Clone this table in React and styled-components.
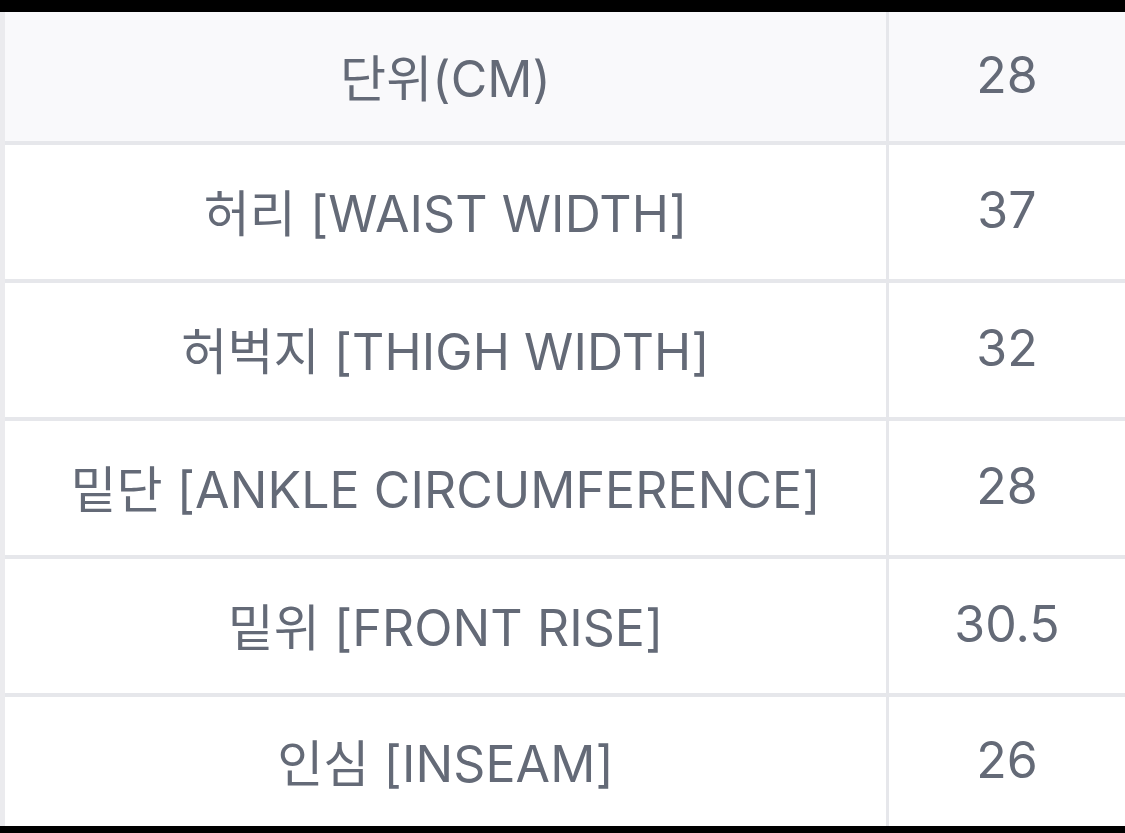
import React from "react";
import styled, { createGlobalStyle } from "styled-components";

const Global = createGlobalStyle`
  html, body { margin: 0; padding: 0; background: #000; }
  body { font-family: Inter, "Noto Sans CJK KR", sans-serif; }
`;

const Page = styled.div`
  width: 1125px;
  height: 833px;
  box-sizing: border-box;
  padding: 12px 0 7px;
  background: #000;
`;

const Table = styled.div`
  display: grid;
  grid-template-columns: 881px 1fr;
  grid-template-rows: 129px repeat(4, 134px) 129px;
  row-gap: 4px;
  column-gap: 3px;
  height: 814px;
  background: #e6e7eb;
  border-left: 5px solid #ebebee;
`;

const Cell = styled.div`
  display: flex;
  align-items: center;
  justify-content: center;
  padding-bottom: 4px;
  background: ${(p) => (p.$head ? "#f9f9fb" : "#ffffff")};
  color: #646a77;
  font-size: 50px;
  font-weight: 400;
  letter-spacing: 0.1px;
  white-space: nowrap;
`;

const rows = [
  ["단위(CM)", "28", true],
  ["허리 [WAIST WIDTH]", "37"],
  ["허벅지 [THIGH WIDTH]", "32"],
  ["밑단 [ANKLE CIRCUMFERENCE]", "28"],
  ["밑위 [FRONT RISE]", "30.5"],
  ["인심 [INSEAM]", "26"],
];

export default function App() {
  return (
    <Page>
      <Global />
      <Table>
        {rows.map(([label, value, head]) => (
          <React.Fragment key={label}>
            <Cell $head={head}>{label}</Cell>
            <Cell $head={head}>{value}</Cell>
          </React.Fragment>
        ))}
      </Table>
    </Page>
  );
}
